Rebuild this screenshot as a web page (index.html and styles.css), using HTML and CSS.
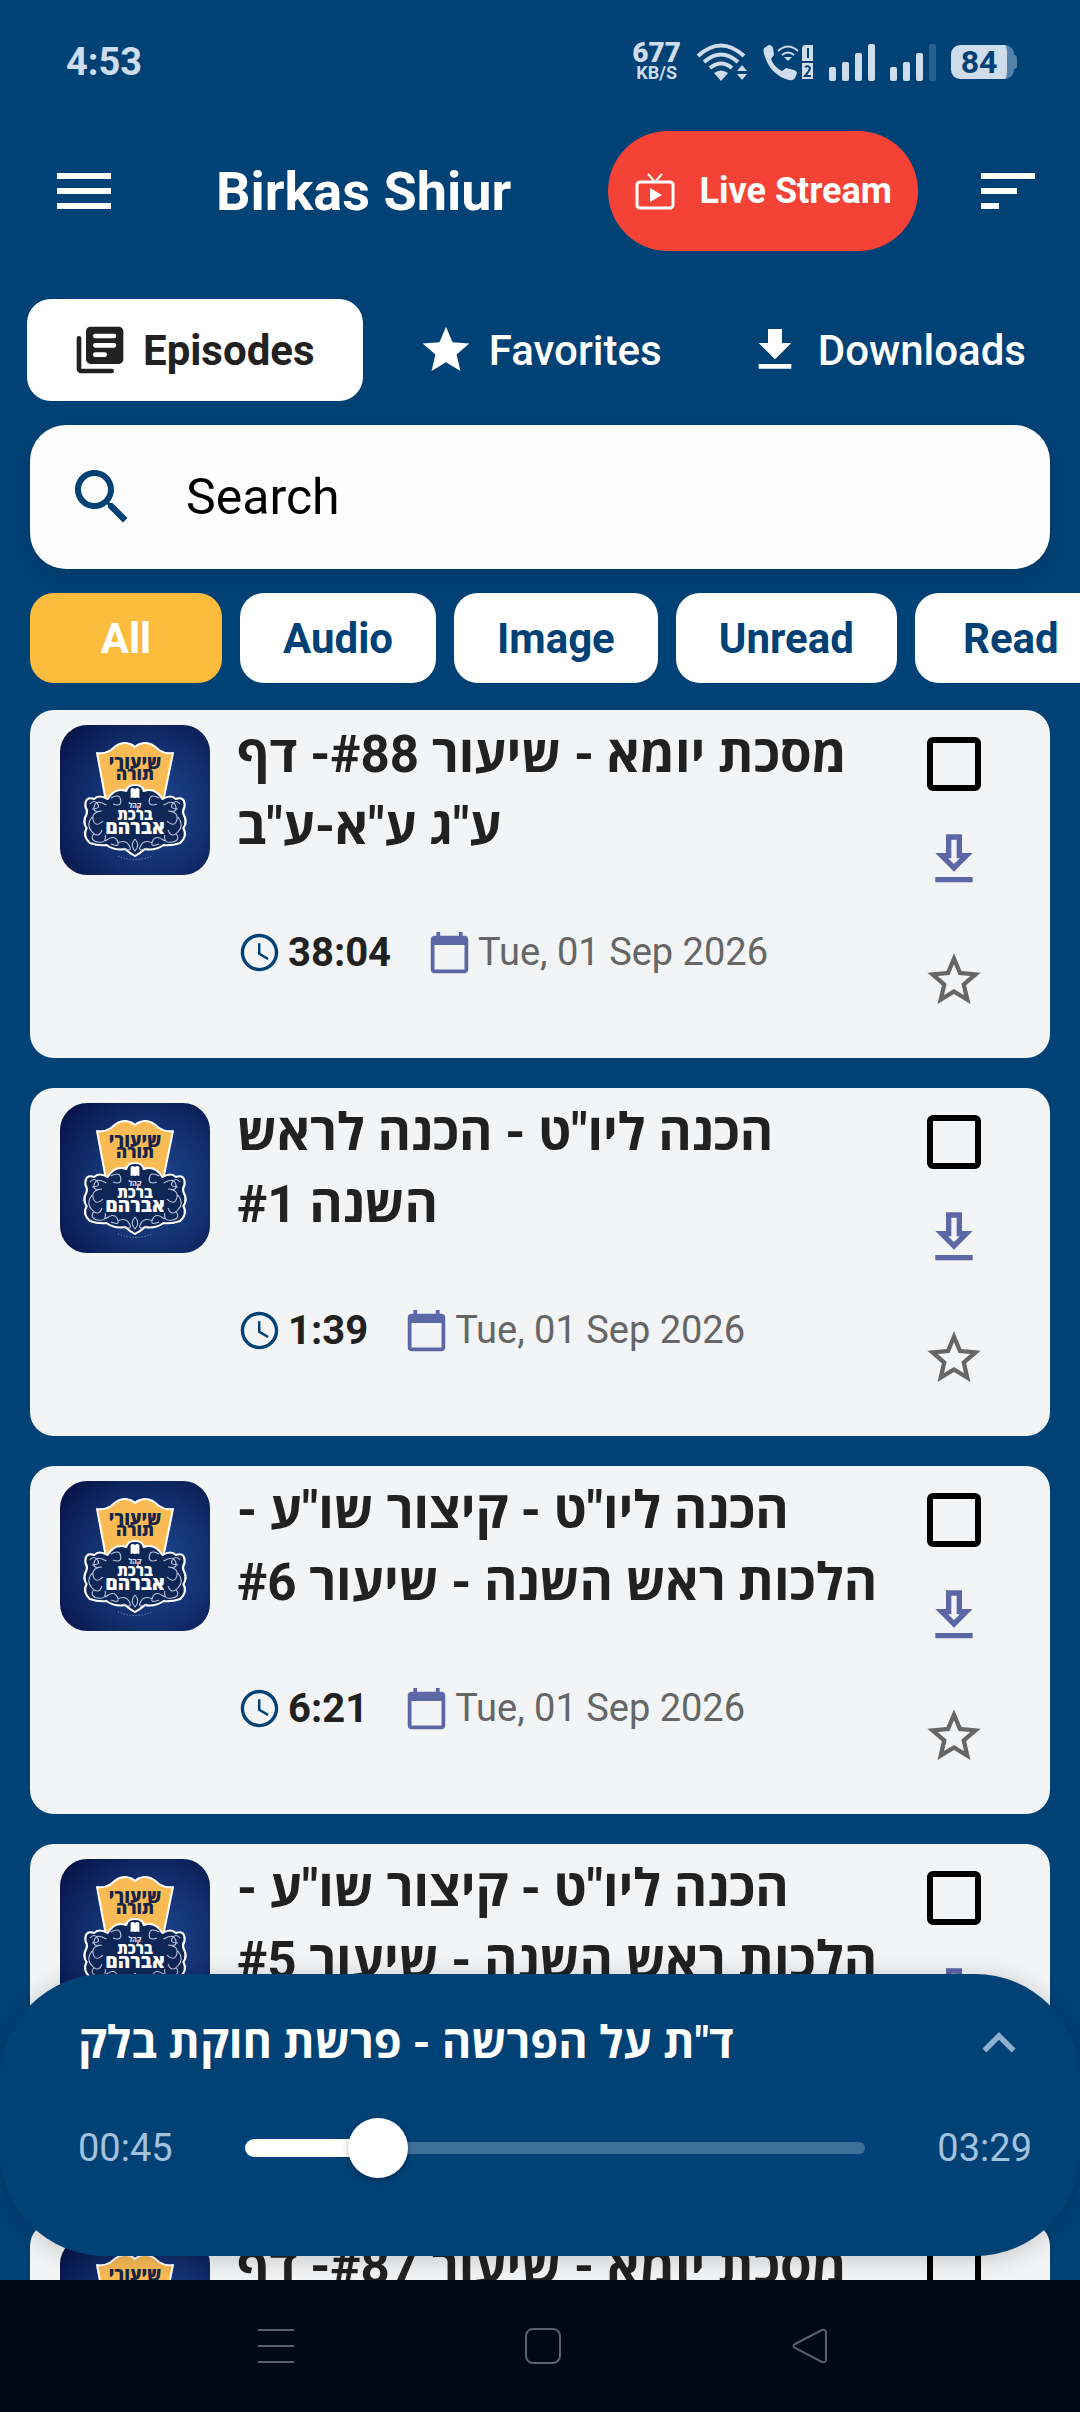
FILE: index.html
```html
<!DOCTYPE html>
<html lang="en">
<head>
    <meta charset="UTF-8">
    <meta name="viewport" content="width=device-width, initial-scale=1.0">
    <title>Birkas Shiur</title>
    <link rel="stylesheet" href="styles.css">
</head>
<body>
    <!-- Shared icons -->
    <svg class="sprite" aria-hidden="true">
        <symbol id="icon-clock" viewBox="0 0 24 24">
            <path d="M11.99 2C6.47 2 2 6.48 2 12s4.47 10 9.99 10C17.52 22 22 17.52 22 12S17.52 2 11.99 2zM12 20.2c-4.5 0-8.2-3.7-8.2-8.2S7.500 3.800 12 3.800s8.200 3.700 8.200 8.200-3.700 8.200-8.200 8.200zM12.500 7H11.200v6l5.050 3 .700-1.100-4.450-2.600z"/>
        </symbol>
        <symbol id="icon-calendar" viewBox="0 0 24 24">
            <path d="M20 3h-1V1h-2v2H7V1H5v2H4c-1.100 0-2 .9-2 2v16c0 1.100.9 2 2 2h16c1.100 0 2-.9 2-2V5c0-1.100-.9-2-2-2zm0 18H4V8h16v13z"/>
        </symbol>
        <symbol id="icon-get" viewBox="0 0 24 24">
            <path d="M19 9h-4V2H9v7H5l7 7 7-7zm-8 2V4h2v7h1.170L12 13.170 9.830 11H11zm-6 7h14v2H5z"/>
        </symbol>
        <symbol id="icon-star-line" viewBox="0 0 24 24">
            <path d="M22 9.240l-7.190-.62L12 2 9.190 8.630 2 9.240l5.460 4.730L5.820 21 12 17.270 18.180 21l-1.630-7.030L22 9.240zM12 15.400l-3.760 2.270 1-4.280-3.320-2.880 4.380-.38L12 6.100l1.710 4.040 4.380.38-3.320 2.880 1 4.280L12 15.400z"/>
        </symbol>
        <symbol id="cover" viewBox="0 0 150 150">
            <path d="M37 28q8 1 14-3 8-8 15-7 6 1 9 4 3-3 9-4 7-1 15 7 6 4 14 3l-11 54H47z" fill="#fbbb54" stroke="#fff" stroke-width="2" stroke-linejoin="round"/>
            <g transform="translate(75 0) scale(1.1 1) translate(-75 0)">
                <path d="M67 66q1-6 8-6t8 6q10-4 17 8 8-5 12 0 9-3 8 8-2 4-1 7 4 8 0 14 4 8-3 15-8 3-15 2-8 6-17 4-4 4-9 7-5-3-9-7-9 2-17-4-7 1-15-2-7-7-3-15-4-6 0-14 1-3-1-7-1-11 8-8 4-5 12 0 7-12 17-8z" fill="#0f2757" stroke="#fff" stroke-width="2" stroke-linejoin="round"/>
                <path d="M71 64q2-2 4 0 2-2 4 0v9q-2-1-4 0-2-1-4 0z" fill="#fff"/>
                <path d="M53 73q8-5 9 2t-7 4M49 80q-9-6-11 1t6 5M34 79q4-5 7 0t-5 5M45 86q-10 1-8 9t9 1M36 92q-6 8 0 15t9-2M38 108q-5 7 3 9t7-7M48 116q8-7 11 0t-6 3M59 118q8-4 11 3t-6 2M97 73q-8-5-9 2t7 4M101 80q9-6 11 1t-6 5M116 79q-4-5-7 0t5 5M105 86q10 1 8 9t-9 1M114 92q6 8 0 15t-9-2M112 108q5 7-3 9t-7-7M102 116q-8-7-11 0t6 3M91 118q-8-4-11 3t6 2M75 114q-5 6 0 12 5-6 0-12" fill="none" stroke="#b9c6de" stroke-width="1"/>
            </g>
            <g class="cover-text">
                <text x="75" y="44" font-size="18" fill="#15254a">שיעורי</text>
                <text x="75" y="55" font-size="17" fill="#15254a">תורה</text>
                <text x="75" y="83" font-size="7" fill="#d5ddec">קהל</text>
                <text x="75" y="95" font-size="15" fill="#fff">ברכת</text>
                <text x="75" y="109" font-size="19" fill="#fff">אברהם</text>
            </g>
            <path d="M58 131q17 7 34 0" fill="none" stroke="#8fa3cb" stroke-width="1" stroke-dasharray="1 2"/>
        </symbol>
    </svg>

    <div class="app">
        <div class="status-bar">
            <span class="time">4:53</span>
            <div class="status-icons">
                <div class="net-speed"><b>677</b><span>KB/S</span></div>
                <svg width="52" height="38" viewBox="0 0 52 38">
                    <g fill="none" stroke="currentColor" stroke-width="4">
                        <path d="M2 13q23-21 46 0M8 19q17-15 34 0M14 25q11-9 22 0"/>
                    </g>
                    <path d="M18 30q7-5 14 0l-7 8z" fill="currentColor"/>
                    <path d="M41 28l5-6 5 6zM41 31h10l-5 6z" fill="currentColor"/>
                </svg>
                <svg width="51" height="38" viewBox="0 0 51 38">
                    <path d="M1 5l5-3q3 0 4 3l1 7-3 4q3 8 11 12l4-3 8 2q3 1 3 3l-2 5q-2 3-6 2Q7 32 1 11q-1-4 0-6z" fill="currentColor"/>
                    <path d="M15 8q10-9 20 0M19 12q6-5 12 0" fill="none" stroke="currentColor" stroke-width="2"/>
                    <path d="M21 14h8l-4 4z" fill="currentColor"/>
                    <path d="M41 2h9v16H39V4zM39 20h11v16H39z" fill="currentColor"/>
                    <path d="M45 5v10M42 24q3-2 5 1 0 2-5 8h6" fill="none" stroke="#004176" stroke-width="2"/>
                </svg>
                <svg width="46" height="38" viewBox="0 0 46 38" fill="currentColor">
                    <rect y="24" width="7" height="14" rx="2"/>
                    <rect x="13" y="19" width="7" height="19" rx="2"/>
                    <rect x="26" y="10" width="7" height="28" rx="2"/>
                    <rect x="39" y="1" width="7" height="37" rx="2"/>
                </svg>
                <svg width="46" height="38" viewBox="0 0 46 38" fill="currentColor">
                    <rect y="24" width="7" height="14" rx="2"/>
                    <rect x="13" y="19" width="7" height="19" rx="2"/>
                    <rect x="26" y="10" width="7" height="28" rx="2"/>
                    <rect x="39" y="1" width="7" height="37" rx="2" opacity="0.2"/>
                </svg>
                <div class="battery">84</div>
            </div>
        </div>

        <header class="header">
            <button type="button" class="icon-button" aria-label="Menu">
                <svg viewBox="0 0 24 24"><path d="M3 18h18v-2H3v2zm0-5h18v-2H3v2zm0-7v2h18V6H3z"/></svg>
            </button>
            <h1>Birkas Shiur</h1>
            <button type="button" class="live-button">
                <svg viewBox="0 0 42 42" fill="none" stroke="currentColor">
                    <rect x="3" y="12" width="36" height="26" rx="3" stroke-width="3"/>
                    <path d="M14 4l7 8 7-8" stroke-width="2"/>
                    <path d="M16 18v14l12-7z" fill="currentColor" stroke="none"/>
                </svg>
                Live Stream
            </button>
            <button type="button" class="icon-button" aria-label="Sort">
                <svg viewBox="0 0 24 24"><path d="M3 18h6v-2H3v2zM3 6v2h18V6H3zm0 7h12v-2H3v2z"/></svg>
            </button>
        </header>

        <nav class="tabs">
            <button type="button" class="tab active">
                <svg viewBox="0 0 24 24"><path d="M3 6a1 1 0 0 0-1 1v13c0 1.100.9 2 2 2h13a1 1 0 0 0 0-2H4V7a1 1 0 0 0-1-1zM20 2H8c-1.100 0-2 .9-2 2v12c0 1.100.9 2 2 2h12c1.100 0 2-.9 2-2V4c0-1.100-.9-2-2-2zm-2 9h-8a1 1 0 0 1 0-2h8a1 1 0 0 1 0 2zm-4 4h-4a1 1 0 0 1 0-2h4a1 1 0 0 1 0 2zm4-8h-8a1 1 0 0 1 0-2h8a1 1 0 0 1 0 2z"/></svg>
                Episodes
            </button>
            <button type="button" class="tab">
                <svg viewBox="0 0 24 24"><path d="M12 17.270L18.180 21l-1.640-7.030L22 9.240l-7.190-.61L12 2 9.190 8.630 2 9.240l5.460 4.730L5.820 21z"/></svg>
                Favorites
            </button>
            <button type="button" class="tab">
                <svg viewBox="0 0 24 24"><path d="M19 9h-4V3H9v6H5l7 7 7-7zM5 18v2h14v-2H5z"/></svg>
                Downloads
            </button>
        </nav>

        <label class="search">
            <svg viewBox="0 0 24 24"><path d="M15.500 14h-.79l-.28-.27C15.410 12.590 16 11.110 16 9.500 16 5.910 13.090 3 9.500 3S3 5.910 3 9.500 5.910 16 9.500 16c1.610 0 3.090-.59 4.230-1.570l.27.28v.79l5 4.990L20.490 19l-4.990-5zm-6 0C7.010 14 5 11.990 5 9.500S7.010 5 9.500 5 14 7.010 14 9.500 11.990 14 9.500 14z"/></svg>
            <input type="text" placeholder="Search" aria-label="Search">
        </label>

        <div class="filters">
            <button type="button" class="chip active">All</button>
            <button type="button" class="chip">Audio</button>
            <button type="button" class="chip">Image</button>
            <button type="button" class="chip">Unread</button>
            <button type="button" class="chip">Read</button>
        </div>

        <main class="content">
            <div class="episode-list">
                <article class="card">
                    <svg class="cover"><use href="#cover"/></svg>
                    <div class="info">
                        <h2 dir="rtl" lang="he">מסכת יומא - שיעור #88- דף<br>ע"ג ע"א-ע"ב</h2>
                        <div class="meta">
                            <svg class="clock"><use href="#icon-clock"/></svg>
                            <span class="length">38:04</span>
                            <svg class="calendar"><use href="#icon-calendar"/></svg>
                            <span class="date">Tue, 01 Sep 2026</span>
                        </div>
                    </div>
                    <div class="actions">
                        <input type="checkbox" aria-label="Mark as read">
                        <button type="button" class="get" aria-label="Download"><svg><use href="#icon-get"/></svg></button>
                        <button type="button" class="star" aria-label="Favorite"><svg><use href="#icon-star-line"/></svg></button>
                    </div>
                </article>

                <article class="card">
                    <svg class="cover"><use href="#cover"/></svg>
                    <div class="info">
                        <h2 dir="rtl" lang="he">הכנה ליו"ט - הכנה לראש<br>השנה #1</h2>
                        <div class="meta">
                            <svg class="clock"><use href="#icon-clock"/></svg>
                            <span class="length">1:39</span>
                            <svg class="calendar"><use href="#icon-calendar"/></svg>
                            <span class="date">Tue, 01 Sep 2026</span>
                        </div>
                    </div>
                    <div class="actions">
                        <input type="checkbox" aria-label="Mark as read">
                        <button type="button" class="get" aria-label="Download"><svg><use href="#icon-get"/></svg></button>
                        <button type="button" class="star" aria-label="Favorite"><svg><use href="#icon-star-line"/></svg></button>
                    </div>
                </article>

                <article class="card">
                    <svg class="cover"><use href="#cover"/></svg>
                    <div class="info">
                        <h2 dir="rtl" lang="he">הכנה ליו"ט - קיצור שו"ע -<br>הלכות ראש השנה - שיעור #6</h2>
                        <div class="meta">
                            <svg class="clock"><use href="#icon-clock"/></svg>
                            <span class="length">6:21</span>
                            <svg class="calendar"><use href="#icon-calendar"/></svg>
                            <span class="date">Tue, 01 Sep 2026</span>
                        </div>
                    </div>
                    <div class="actions">
                        <input type="checkbox" aria-label="Mark as read">
                        <button type="button" class="get" aria-label="Download"><svg><use href="#icon-get"/></svg></button>
                        <button type="button" class="star" aria-label="Favorite"><svg><use href="#icon-star-line"/></svg></button>
                    </div>
                </article>

                <article class="card">
                    <svg class="cover"><use href="#cover"/></svg>
                    <div class="info">
                        <h2 dir="rtl" lang="he">הכנה ליו"ט - קיצור שו"ע -<br>הלכות ראש השנה - שיעור #5</h2>
                    </div>
                    <div class="actions">
                        <input type="checkbox" aria-label="Mark as read">
                        <button type="button" class="get" aria-label="Download"><svg><use href="#icon-get"/></svg></button>
                        <button type="button" class="star" aria-label="Favorite"><svg><use href="#icon-star-line"/></svg></button>
                    </div>
                </article>

                <article class="card">
                    <svg class="cover"><use href="#cover"/></svg>
                    <div class="info">
                        <h2 dir="rtl" lang="he">מסכת יומא - שיעור #87- דף</h2>
                    </div>
                    <div class="actions">
                        <input type="checkbox" aria-label="Mark as read">
                    </div>
                </article>
            </div>

            <!-- Mini player, floats over the list -->
            <section class="player">
                <div class="player-title">
                    <h3 dir="rtl" lang="he">ד"ת על הפרשה - פרשת חוקת בלק</h3>
                    <button type="button" aria-label="Expand player">
                        <svg viewBox="0 0 24 24"><path d="M12 8l-6 6 1.410 1.410L12 10.830l4.590 4.580L18 14z"/></svg>
                    </button>
                </div>
                <div class="player-seek">
                    <span>00:45</span>
                    <div class="seek">
                        <div class="seek-rail"></div>
                        <div class="seek-fill" style="width: 21.5%"></div>
                        <input type="range" min="0" max="209" value="45" aria-label="Position">
                    </div>
                    <span>03:29</span>
                </div>
            </section>
        </main>

        <div class="system-nav">
            <button type="button" aria-label="Recent apps">
                <svg viewBox="0 0 36 36"><path d="M0 2h36M0 18h36M0 34h36"/></svg>
            </button>
            <button type="button" aria-label="Home">
                <svg viewBox="0 0 36 36"><rect x="1" y="1" width="34" height="34" rx="7"/></svg>
            </button>
            <button type="button" aria-label="Back">
                <svg viewBox="0 0 36 36"><path d="M3 16L30 2q4-1 4 3v26q0 4-4 3L3 20q-3-2 0-4z"/></svg>
            </button>
        </div>
    </div>
</body>
</html>
```

FILE: styles.css
```css
* {
    box-sizing: border-box;
}

body {
    margin: 0;
    background-color: #004176;
    font-family: Roboto, "Open Sans", sans-serif;
    color: #212121;
}

h1, h2, h3 {
    margin: 0;
}

button {
    border: none;
    padding: 0;
    background: none;
    color: inherit;
    font-family: inherit;
    cursor: pointer;
}

svg {
    display: block;
    flex-shrink: 0;
}

.sprite {
    display: none;
}

.app {
    display: flex;
    flex-direction: column;
    height: 100vh;
    overflow: hidden;
}

/* Status bar */
.status-bar {
    display: flex;
    justify-content: space-between;
    align-items: center;
    height: 124px;
    padding: 0 63px 0 66px;
    color: #cfdcec;
    font-weight: 700;
}

.time {
    font-size: 38px;
}

.status-icons {
    display: flex;
    align-items: center;
    gap: 15px;
}

.net-speed {
    display: flex;
    flex-direction: column;
    align-items: center;
}

.net-speed b {
    font-size: 28px;
    line-height: 22px;
}

.net-speed span {
    font-size: 18px;
    line-height: 18px;
}

.battery {
    position: relative;
    width: 63px;
    height: 34px;
    margin-right: 3px;
    border-radius: 9px;
    border-right: 7px solid #5382ab;
    background-color: #cfdcec;
    color: #004176;
    font-size: 32px;
    line-height: 35px;
    text-align: center;
}

.battery::after {
    content: "";
    position: absolute;
    top: 10px;
    right: -10px;
    width: 3px;
    height: 14px;
    border-radius: 0 3px 3px 0;
    background-color: #5382ab;
}

/* Header */
.header {
    display: flex;
    align-items: center;
    padding: 7px 36px 0 48px;
    color: white;
    fill: white;
}

.icon-button svg {
    width: 72px;
    height: 72px;
}

.header h1 {
    flex: 1;
    margin-left: 96px;
    font-size: 54px;
    font-weight: 700;
    white-space: nowrap;
}

.live-button {
    display: flex;
    align-items: center;
    gap: 24px;
    height: 120px;
    margin-right: 54px;
    padding: 0 26px;
    border-radius: 60px;
    background-color: #f44336;
    color: white;
    font-size: 36px;
    font-weight: 700;
    white-space: nowrap;
}

.live-button svg {
    width: 42px;
    height: 42px;
}

/* Tabs */
.tabs {
    display: flex;
    justify-content: space-between;
    padding: 48px 24px 0 27px;
}

.tab {
    display: flex;
    align-items: center;
    gap: 15px;
    height: 102px;
    padding-right: 30px;
    color: white;
    fill: white;
    font-size: 42px;
    font-weight: 500;
}

.tab svg {
    width: 56px;
    height: 56px;
}

.tab.active {
    padding: 0 48px 0 45px;
    border-radius: 24px;
    background-color: white;
    color: #212121;
    fill: #212121;
    font-weight: 700;
}

/* Search */
.search {
    display: flex;
    align-items: center;
    gap: 48px;
    height: 144px;
    margin: 24px 30px 0;
    padding: 0 36px;
    border-radius: 36px;
    background-color: #fdfdfd;
    box-shadow: 0 9px 24px rgba(0, 0, 0, 0.12);
    fill: #004176;
}

.search svg {
    width: 72px;
    height: 72px;
}

.search input {
    flex: 1;
    min-width: 0;
    padding: 0;
    border: none;
    outline: none;
    background: none;
    font-family: inherit;
    font-size: 50px;
}

.search input::placeholder {
    color: black;
}

/* Filters */
.filters {
    display: flex;
    gap: 18px;
    margin-top: 24px;
    padding-left: 30px;
    overflow: hidden;
    flex-shrink: 0;
}

.chip {
    flex-shrink: 0;
    min-width: 192px;
    height: 90px;
    padding: 0 43px;
    border-radius: 24px;
    background-color: white;
    color: #004176;
    font-size: 42px;
    font-weight: 700;
}

.chip.active {
    background-color: #fbbc3d;
    color: white;
}

/* Episodes */
.content {
    position: relative;
    flex: 1;
    min-height: 0;
    margin-top: 27px;
    overflow: hidden;
}

.episode-list {
    display: flex;
    flex-direction: column;
    gap: 30px;
    padding: 0 30px;
}

.card {
    display: flex;
    min-height: 348px;
    padding: 9px 30px;
    border-radius: 24px;
    background-color: #f2f4f6;
}

.cover {
    width: 150px;
    height: 150px;
    margin-top: 6px;
    border-radius: 27px;
    background: radial-gradient(circle at 60% 55%, #1f4793, #12306f 50%, #050f40);
}

.cover-text {
    font-family: "Open Sans", sans-serif;
    font-weight: 800;
    text-anchor: middle;
}

.info {
    flex: 1;
    margin-left: 27px;
}

.info h2 {
    height: 197px;
    font-size: 51px;
    font-weight: 700;
    line-height: 72px;
    text-align: left;
    white-space: nowrap;
}

.meta {
    display: flex;
    align-items: center;
    height: 72px;
}

.meta svg {
    width: 45px;
    height: 45px;
}

.clock {
    fill: #004176;
}

.calendar {
    margin-left: 36px;
    fill: #5c68a6;
}

.length {
    margin-left: 6px;
    font-size: 40px;
    font-weight: 700;
}

.date {
    margin-left: 6px;
    color: #666;
    font-size: 38px;
}

.actions {
    display: flex;
    flex-direction: column;
    align-items: center;
    width: 132px;
    padding-top: 18px;
}

.actions input {
    appearance: none;
    width: 54px;
    height: 54px;
    margin: 0;
    border: 6px solid black;
    border-radius: 6px;
}

.actions svg {
    width: 64px;
    height: 64px;
}

.get {
    margin-top: 38px;
    fill: #5c68a6;
}

.star {
    margin-top: 55px;
    fill: #666;
}

/* Player */
.player {
    position: absolute;
    left: 0;
    right: 0;
    bottom: 24px;
    padding: 30px 48px 78px 78px;
    border-radius: 105px;
    background-color: #004176;
    box-shadow: 0 3px 24px rgba(0, 0, 0, 0.2);
    color: white;
}

.player-title {
    display: flex;
    justify-content: space-between;
    align-items: center;
    height: 78px;
}

.player-title h3 {
    font-size: 45px;
    font-weight: 700;
    line-height: 72px;
}

.player-title svg {
    width: 66px;
    height: 66px;
    fill: #8fb0cd;
}

.player-seek {
    display: flex;
    align-items: center;
    gap: 72px;
    margin-top: 36px;
    color: #a3c2de;
    font-size: 38px;
}

.seek {
    display: grid;
    flex: 1;
    align-items: center;
}

.seek > * {
    grid-area: 1 / 1;
}

.seek-rail {
    height: 12px;
    border-radius: 6px;
    background-color: #406f98;
}

.seek-fill {
    height: 18px;
    border-radius: 9px;
    background-color: white;
}

/* wider than the rail so the thumb centre can reach both ends */
.seek input {
    appearance: none;
    width: calc(100% + 60px);
    height: 60px;
    margin: 0 -30px;
    background: none;
}

.seek input::-webkit-slider-thumb {
    appearance: none;
    width: 60px;
    height: 60px;
    border-radius: 50%;
    background-color: white;
    box-shadow: 0 2px 6px rgba(0, 0, 0, 0.3);
}

/* System navigation */
.system-nav {
    display: flex;
    justify-content: space-between;
    align-items: center;
    height: 132px;
    padding: 0 252px 0 258px;
    background-color: #010912;
}

.system-nav svg {
    width: 36px;
    height: 36px;
    fill: none;
    stroke: #5a6169;
    stroke-width: 2;
}
```
